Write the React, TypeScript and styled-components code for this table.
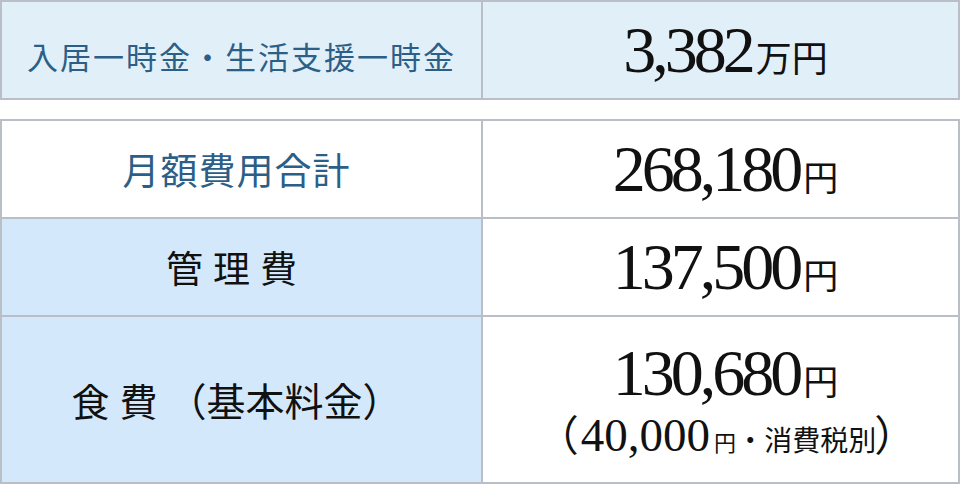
import React from 'react';
import styled, { createGlobalStyle } from 'styled-components';

const GlobalStyle = createGlobalStyle`
  html, body {
    margin: 0;
    padding: 0;
    background: #ffffff;
  }
  body {
    font-family: 'Noto Sans CJK JP', sans-serif;
  }
`;

const colors = {
  border: '#babfc7',
  head: '#e1eff9',
  blue: '#d3e9fb',
  white: '#ffffff',
  labelBlue: '#2c5f87',
  ink: '#111111',
};

type Tone = 'head' | 'white' | 'blue';

const StyledPage = styled.div`
  width: 960px;
  display: flex;
  flex-direction: column;
  gap: 19px;
`;

const StyledTable = styled.div<{ $rows: string }>`
  display: grid;
  grid-template-columns: 479px 475px;
  grid-template-rows: ${({ $rows }) => $rows};
  gap: 2px;
  padding: 2px;
  background: ${colors.border};
`;

const StyledLabelCell = styled.div<{ $tone: Tone }>`
  display: flex;
  align-items: center;
  justify-content: center;
  background: ${({ $tone }) => colors[$tone]};
  color: ${({ $tone }) => ($tone === 'blue' ? colors.ink : colors.labelBlue)};
  padding: ${({ $tone }) => ($tone === 'head' ? '10px 0 0 0' : '0 10px 0 0')};
  font-family: 'Noto Sans CJK JP', sans-serif;
  white-space: nowrap;
`;

const StyledLabel = styled.span<{ $size: number; $spacing: number }>`
  font-size: ${({ $size }) => $size}px;
  letter-spacing: ${({ $spacing }) => $spacing}px;
  line-height: 1;
`;

const StyledValueCell = styled.div<{ $tone: Tone }>`
  display: flex;
  flex-direction: column;
  align-items: center;
  justify-content: center;
  gap: 6px;
  background: ${({ $tone }) => colors[$tone]};
  color: ${colors.ink};
  padding-left: 10px;
  white-space: nowrap;
`;

const StyledAmount = styled.div`
  font-family: 'Liberation Serif', 'Noto Sans CJK JP', serif;
  font-size: 66px;
  letter-spacing: -4px;
  line-height: 1;
  display: flex;
  align-items: baseline;
`;

const StyledUnit = styled.span<{ $size: number }>`
  font-family: 'Noto Sans CJK JP', sans-serif;
  font-size: ${({ $size }) => $size}px;
  letter-spacing: 0;
  margin-left: 4px;
`;

const StyledNote = styled.div`
  font-family: 'Liberation Serif', 'Noto Sans CJK JP', serif;
  font-size: 47px;
  line-height: 1;
  display: flex;
  align-items: baseline;
`;

const StyledParen = styled.span<{ $side: 'open' | 'close' }>`
  font-family: 'Noto Sans CJK JP', sans-serif;
  font-size: 42px;
  margin: ${({ $side }) => ($side === 'open' ? '0 2px 0 -24px' : '0 -26px 0 -2px')};
`;

const StyledNoteText = styled.span`
  font-family: 'Noto Sans CJK JP', sans-serif;
  font-size: 28px;
`;

const Fees = () => {
  return (
    <StyledPage>
      <StyledTable $rows="96px">
        <StyledLabelCell $tone="head">
          <StyledLabel $size={31} $spacing={2}>
            入居一時金・生活支援一時金
          </StyledLabel>
        </StyledLabelCell>
        <StyledValueCell $tone="head">
          <StyledAmount>
            3,382<StyledUnit $size={36}>万円</StyledUnit>
          </StyledAmount>
        </StyledValueCell>
      </StyledTable>

      <StyledTable $rows="96px 96px 165px">
        <StyledLabelCell $tone="white">
          <StyledLabel $size={37} $spacing={1}>
            月額費用合計
          </StyledLabel>
        </StyledLabelCell>
        <StyledValueCell $tone="white">
          <StyledAmount>
            268,180<StyledUnit $size={35}>円</StyledUnit>
          </StyledAmount>
        </StyledValueCell>

        <StyledLabelCell $tone="blue">
          <StyledLabel $size={37} $spacing={10}>
            管理費
          </StyledLabel>
        </StyledLabelCell>
        <StyledValueCell $tone="white">
          <StyledAmount>
            137,500<StyledUnit $size={35}>円</StyledUnit>
          </StyledAmount>
        </StyledValueCell>

        <StyledLabelCell $tone="blue">
          <StyledLabel $size={38} $spacing={10}>
            食費
          </StyledLabel>
          <StyledLabel $size={39} $spacing={0}>
            （基本料金）
          </StyledLabel>
        </StyledLabelCell>
        <StyledValueCell $tone="white">
          <StyledAmount>
            130,680<StyledUnit $size={35}>円</StyledUnit>
          </StyledAmount>
          <StyledNote>
            <StyledParen $side="open">（</StyledParen>
            40,000<StyledUnit $size={22}>円</StyledUnit>
            <StyledNoteText>・消費税別</StyledNoteText>
            <StyledParen $side="close">）</StyledParen>
          </StyledNote>
        </StyledValueCell>
      </StyledTable>
    </StyledPage>
  );
};

const App = () => (
  <>
    <GlobalStyle />
    <Fees />
  </>
);

export default App;
